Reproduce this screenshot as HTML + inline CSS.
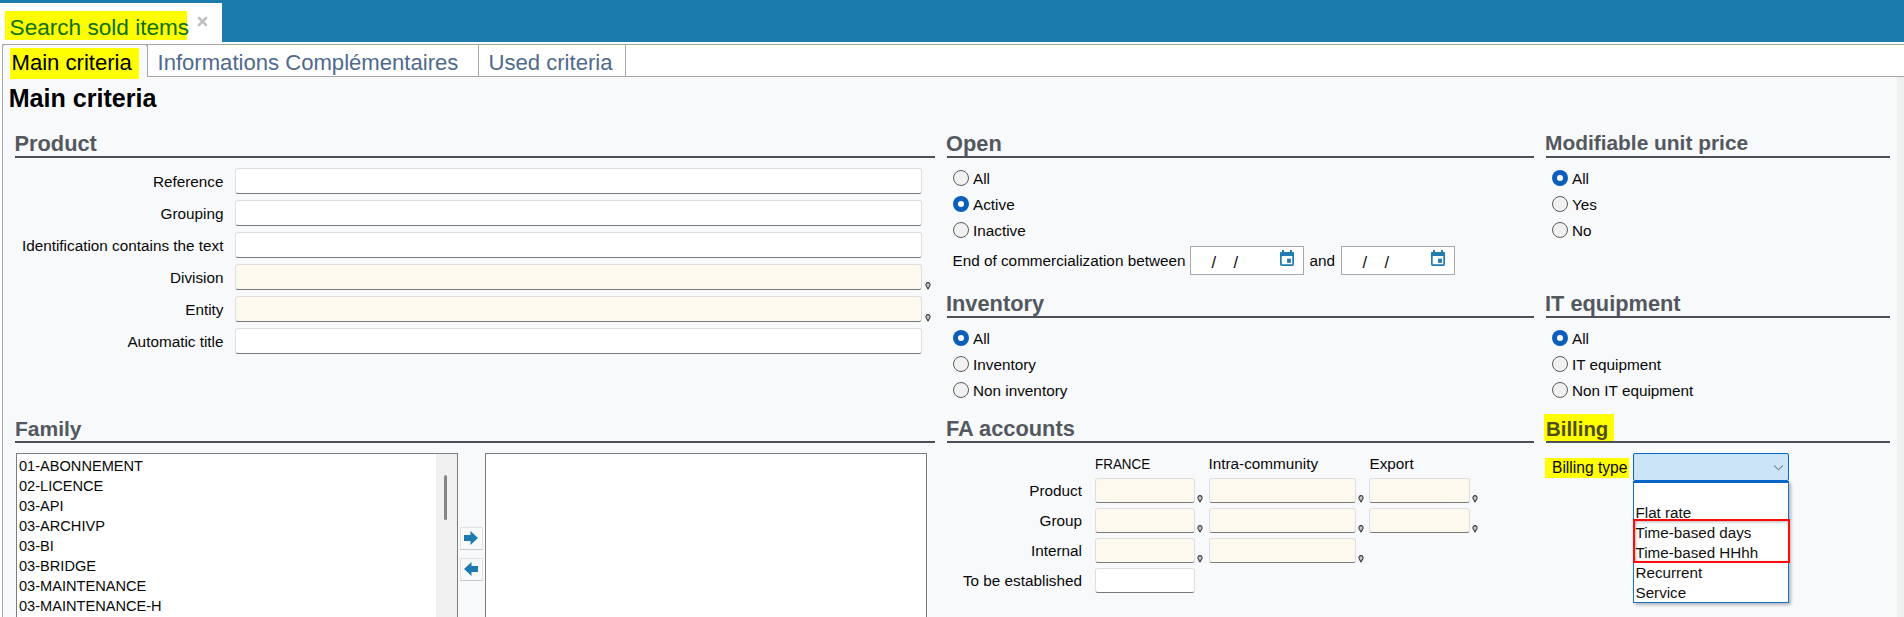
<!DOCTYPE html>
<html><head><meta charset="utf-8"><style>
html,body{margin:0;padding:0}
body{width:1904px;height:617px;overflow:hidden;position:relative;background:#f8f9fb;font-family:"Liberation Sans",sans-serif}
.t{position:absolute;white-space:nowrap}
.r{position:absolute}
.inp{box-sizing:border-box;border:1px solid #dedede;border-bottom:1.5px solid #7a7a7a;border-radius:3px}
</style></head><body>
<div class="r" style="left:0px;top:0px;width:1904px;height:42px;background:#1b7bac"></div>
<div class="r" style="left:0px;top:42px;width:1904px;height:2px;background:#fff"></div>
<div class="r" style="left:0px;top:3px;width:222px;height:39px;background:#fff"></div>
<div class="r" style="left:5px;top:11px;width:182px;height:29px;background:#ffff00"></div>
<div class="t" style="left:9.6px;top:16.87px;font-size:22.6px;line-height:22.6px;color:#0b700b;font-weight:400;">Search sold items</div>
<svg class="r" style="left:197px;top:16px" width="11" height="11" viewBox="0 0 11 11"><path d="M2 2L9 9M9 2L2 9" stroke="#c2c2c2" stroke-width="2.7" stroke-linecap="round"/></svg>
<div class="r" style="left:0px;top:42px;width:1904px;height:575px;background:#fff"></div>
<div class="r" style="left:2px;top:44px;width:1902px;height:1px;background:#a6a6a6"></div>
<div class="r" style="left:2px;top:76px;width:1902px;height:1px;background:#a6a6a6"></div>
<div class="r" style="left:2px;top:44px;width:146px;height:33px;background:#f8f9fb;border:1px solid #a6a6a6;border-bottom:none;border-radius:3px 3px 0 0;box-sizing:border-box"></div>
<div class="r" style="left:147px;top:44px;width:1px;height:33px;background:#a6a6a6"></div>
<div class="r" style="left:478px;top:44px;width:1px;height:33px;background:#a6a6a6"></div>
<div class="r" style="left:625px;top:44px;width:1px;height:33px;background:#a6a6a6"></div>
<div class="r" style="left:10px;top:48px;width:129px;height:31px;background:#ffff00"></div>
<div class="t" style="left:11.5px;top:51.79px;font-size:22.1px;line-height:22.1px;color:#000;font-weight:400;">Main criteria</div>
<div class="t" style="left:157.5px;top:51.79px;font-size:22.1px;line-height:22.1px;color:#4f6a8c;font-weight:400;">Informations Compl&eacute;mentaires</div>
<div class="t" style="left:488.5px;top:51.79px;font-size:22.1px;line-height:22.1px;color:#4f6a8c;font-weight:400;">Used criteria</div>
<div class="r" style="left:2px;top:77px;width:1902px;height:540px;background:#f8f9fb"></div>
<div class="r" style="left:2px;top:77px;width:1px;height:540px;background:#a6a6a6"></div>
<div class="r" style="left:1897px;top:77px;width:7px;height:540px;background:#efefef"></div>
<div class="r" style="left:10px;top:48px;width:129px;height:31px;background:#ffff00"></div>
<div class="t" style="left:11.5px;top:51.79px;font-size:22.1px;line-height:22.1px;color:#000;font-weight:400;">Main criteria</div>
<div class="t" style="left:8.7px;top:85.75px;font-size:25.1px;line-height:25.1px;color:#000;font-weight:700;">Main criteria</div>
<div class="t" style="left:14.5px;top:132.55px;font-size:21.8px;line-height:21.8px;color:#53585f;font-weight:700;">Product</div>
<div class="r" style="left:15px;top:156px;width:920px;height:2px;background:#4b5058"></div>
<div class="t" style="left:946px;top:132.55px;font-size:21.8px;line-height:21.8px;color:#53585f;font-weight:700;">Open</div>
<div class="r" style="left:947px;top:156px;width:587px;height:2px;background:#4b5058"></div>
<div class="t" style="left:1545px;top:133.31px;font-size:20.9px;line-height:20.9px;color:#53585f;font-weight:700;">Modifiable unit price</div>
<div class="r" style="left:1546px;top:156px;width:344px;height:2px;background:#4b5058"></div>
<div class="t" style="left:946px;top:292.55px;font-size:21.8px;line-height:21.8px;color:#53585f;font-weight:700;">Inventory</div>
<div class="r" style="left:947px;top:316px;width:587px;height:2px;background:#4b5058"></div>
<div class="t" style="left:1545px;top:292.55px;font-size:21.8px;line-height:21.8px;color:#53585f;font-weight:700;">IT equipment</div>
<div class="r" style="left:1546px;top:316px;width:344px;height:2px;background:#4b5058"></div>
<div class="t" style="left:15px;top:418.22px;font-size:21.0px;line-height:21.0px;color:#53585f;font-weight:700;">Family</div>
<div class="r" style="left:15px;top:441px;width:920px;height:2px;background:#4b5058"></div>
<div class="t" style="left:946px;top:417.55px;font-size:21.8px;line-height:21.8px;color:#53585f;font-weight:700;">FA accounts</div>
<div class="r" style="left:947px;top:441px;width:587px;height:2px;background:#4b5058"></div>
<div class="r" style="left:1544px;top:414px;width:70px;height:27px;background:#ffff00"></div>
<div class="t" style="left:1546px;top:418.73px;font-size:20.4px;line-height:20.4px;color:#4e4e14;font-weight:700;">Billing</div>
<div class="r" style="left:1546px;top:441px;width:344px;height:2px;background:#4b5058"></div>
<div class="t" style="left:-376.5px;width:600px;text-align:right;top:174.05px;font-size:15.3px;line-height:15.3px;color:#080808;font-weight:400;">Reference</div>
<div class="r inp" style="left:235px;top:168px;width:687px;height:26px;background:#fff"></div>
<div class="t" style="left:-376.5px;width:600px;text-align:right;top:206.05px;font-size:15.3px;line-height:15.3px;color:#080808;font-weight:400;">Grouping</div>
<div class="r inp" style="left:235px;top:200px;width:687px;height:26px;background:#fff"></div>
<div class="t" style="left:-376.5px;width:600px;text-align:right;top:238.05px;font-size:15.3px;line-height:15.3px;color:#080808;font-weight:400;">Identification contains the text</div>
<div class="r inp" style="left:235px;top:232px;width:687px;height:26px;background:#fff"></div>
<div class="t" style="left:-376.5px;width:600px;text-align:right;top:270.05px;font-size:15.3px;line-height:15.3px;color:#080808;font-weight:400;">Division</div>
<div class="r inp" style="left:235px;top:264px;width:687px;height:26px;background:#fdf9ee"></div>
<svg class="r" style="left:924.5px;top:282px" width="6" height="8" viewBox="0 0 6 8"><path d="M3 6.9L1.0 3.4A2.1 2.1 0 1 1 5.0 3.4Z" fill="#c8c8c8" stroke="#3a3a3a" stroke-width="1.1" stroke-linejoin="round"/></svg>
<div class="t" style="left:-376.5px;width:600px;text-align:right;top:302.05px;font-size:15.3px;line-height:15.3px;color:#080808;font-weight:400;">Entity</div>
<div class="r inp" style="left:235px;top:296px;width:687px;height:26px;background:#fdf9ee"></div>
<svg class="r" style="left:924.5px;top:314px" width="6" height="8" viewBox="0 0 6 8"><path d="M3 6.9L1.0 3.4A2.1 2.1 0 1 1 5.0 3.4Z" fill="#c8c8c8" stroke="#3a3a3a" stroke-width="1.1" stroke-linejoin="round"/></svg>
<div class="t" style="left:-376.5px;width:600px;text-align:right;top:334.05px;font-size:15.3px;line-height:15.3px;color:#080808;font-weight:400;">Automatic title</div>
<div class="r inp" style="left:235px;top:328px;width:687px;height:26px;background:#fff"></div>
<div class="r" style="left:953px;top:170px;width:16px;height:16px;border-radius:50%;background:#f1f1f1;border:1px solid #5c5c5c;box-sizing:border-box"></div>
<div class="t" style="left:973px;top:170.55px;font-size:15.3px;line-height:15.3px;color:#080808;font-weight:400;">All</div>
<div class="r" style="left:953px;top:196px;width:16px;height:16px;border-radius:50%;background:#0b5fb9"></div>
<div class="r" style="left:958px;top:201px;width:6px;height:6px;border-radius:50%;background:#fff"></div>
<div class="t" style="left:973px;top:196.55px;font-size:15.3px;line-height:15.3px;color:#080808;font-weight:400;">Active</div>
<div class="r" style="left:953px;top:222px;width:16px;height:16px;border-radius:50%;background:#f1f1f1;border:1px solid #5c5c5c;box-sizing:border-box"></div>
<div class="t" style="left:973px;top:222.55px;font-size:15.3px;line-height:15.3px;color:#080808;font-weight:400;">Inactive</div>
<div class="r" style="left:1552px;top:170px;width:16px;height:16px;border-radius:50%;background:#0b5fb9"></div>
<div class="r" style="left:1557px;top:175px;width:6px;height:6px;border-radius:50%;background:#fff"></div>
<div class="t" style="left:1572px;top:170.55px;font-size:15.3px;line-height:15.3px;color:#080808;font-weight:400;">All</div>
<div class="r" style="left:1552px;top:196px;width:16px;height:16px;border-radius:50%;background:#f1f1f1;border:1px solid #5c5c5c;box-sizing:border-box"></div>
<div class="t" style="left:1572px;top:196.55px;font-size:15.3px;line-height:15.3px;color:#080808;font-weight:400;">Yes</div>
<div class="r" style="left:1552px;top:222px;width:16px;height:16px;border-radius:50%;background:#f1f1f1;border:1px solid #5c5c5c;box-sizing:border-box"></div>
<div class="t" style="left:1572px;top:222.55px;font-size:15.3px;line-height:15.3px;color:#080808;font-weight:400;">No</div>
<div class="r" style="left:953px;top:330px;width:16px;height:16px;border-radius:50%;background:#0b5fb9"></div>
<div class="r" style="left:958px;top:335px;width:6px;height:6px;border-radius:50%;background:#fff"></div>
<div class="t" style="left:973px;top:330.55px;font-size:15.3px;line-height:15.3px;color:#080808;font-weight:400;">All</div>
<div class="r" style="left:953px;top:356px;width:16px;height:16px;border-radius:50%;background:#f1f1f1;border:1px solid #5c5c5c;box-sizing:border-box"></div>
<div class="t" style="left:973px;top:356.55px;font-size:15.3px;line-height:15.3px;color:#080808;font-weight:400;">Inventory</div>
<div class="r" style="left:953px;top:382px;width:16px;height:16px;border-radius:50%;background:#f1f1f1;border:1px solid #5c5c5c;box-sizing:border-box"></div>
<div class="t" style="left:973px;top:382.55px;font-size:15.3px;line-height:15.3px;color:#080808;font-weight:400;">Non inventory</div>
<div class="r" style="left:1552px;top:330px;width:16px;height:16px;border-radius:50%;background:#0b5fb9"></div>
<div class="r" style="left:1557px;top:335px;width:6px;height:6px;border-radius:50%;background:#fff"></div>
<div class="t" style="left:1572px;top:330.55px;font-size:15.3px;line-height:15.3px;color:#080808;font-weight:400;">All</div>
<div class="r" style="left:1552px;top:356px;width:16px;height:16px;border-radius:50%;background:#f1f1f1;border:1px solid #5c5c5c;box-sizing:border-box"></div>
<div class="t" style="left:1572px;top:356.55px;font-size:15.3px;line-height:15.3px;color:#080808;font-weight:400;">IT equipment</div>
<div class="r" style="left:1552px;top:382px;width:16px;height:16px;border-radius:50%;background:#f1f1f1;border:1px solid #5c5c5c;box-sizing:border-box"></div>
<div class="t" style="left:1572px;top:382.55px;font-size:15.3px;line-height:15.3px;color:#080808;font-weight:400;">Non IT equipment</div>
<div class="t" style="left:952.5px;top:253.05px;font-size:15.3px;line-height:15.3px;color:#080808;font-weight:400;">End of commercialization between</div>
<div class="t" style="left:1309.5px;top:253.05px;font-size:15.3px;line-height:15.3px;color:#080808;font-weight:400;">and</div>
<div class="r" style="left:1190px;top:246px;width:114px;height:29px;background:#fff;border:1px solid #a9a9a9;box-sizing:border-box"></div>
<div class="t" style="left:1211.5px;top:254.03px;font-size:16.5px;line-height:16.5px;color:#080808;font-weight:400;">/</div>
<div class="t" style="left:1233.5px;top:254.03px;font-size:16.5px;line-height:16.5px;color:#080808;font-weight:400;">/</div>
<svg class="r" style="left:1280px;top:250px" width="14" height="16" viewBox="0 0 14 16"><rect x="0.85" y="2.85" width="12.3" height="12.3" rx="0.9" fill="none" stroke="#1f7bb0" stroke-width="1.7"/><rect x="0" y="2" width="14" height="4" rx="0.8" fill="#1f7bb0"/><rect x="2" y="0" width="2" height="3" fill="#1f7bb0"/><rect x="10" y="0" width="2" height="3" fill="#1f7bb0"/><rect x="7.1" y="8.7" width="3.8" height="4.2" fill="#1f7bb0"/></svg>
<div class="r" style="left:1341px;top:246px;width:114px;height:29px;background:#fff;border:1px solid #a9a9a9;box-sizing:border-box"></div>
<div class="t" style="left:1362.5px;top:254.03px;font-size:16.5px;line-height:16.5px;color:#080808;font-weight:400;">/</div>
<div class="t" style="left:1384.5px;top:254.03px;font-size:16.5px;line-height:16.5px;color:#080808;font-weight:400;">/</div>
<svg class="r" style="left:1431px;top:250px" width="14" height="16" viewBox="0 0 14 16"><rect x="0.85" y="2.85" width="12.3" height="12.3" rx="0.9" fill="none" stroke="#1f7bb0" stroke-width="1.7"/><rect x="0" y="2" width="14" height="4" rx="0.8" fill="#1f7bb0"/><rect x="2" y="0" width="2" height="3" fill="#1f7bb0"/><rect x="10" y="0" width="2" height="3" fill="#1f7bb0"/><rect x="7.1" y="8.7" width="3.8" height="4.2" fill="#1f7bb0"/></svg>
<div class="r" style="left:16px;top:453px;width:442px;height:187px;background:#fff;border:1px solid #7d7d7d;box-sizing:border-box"></div>
<div class="r" style="left:436px;top:454px;width:21px;height:163px;background:#f0f0f0"></div>
<div class="r" style="left:444px;top:475px;width:3px;height:45px;background:#868686;border-radius:2px"></div>
<div class="t" style="left:19.3px;top:458.13px;font-size:15.2px;line-height:15.2px;color:#080808;font-weight:400;transform:scaleX(0.96);transform-origin:0 0">01-ABONNEMENT</div>
<div class="t" style="left:19.3px;top:478.13px;font-size:15.2px;line-height:15.2px;color:#080808;font-weight:400;transform:scaleX(0.96);transform-origin:0 0">02-LICENCE</div>
<div class="t" style="left:19.3px;top:498.13px;font-size:15.2px;line-height:15.2px;color:#080808;font-weight:400;transform:scaleX(0.96);transform-origin:0 0">03-API</div>
<div class="t" style="left:19.3px;top:518.13px;font-size:15.2px;line-height:15.2px;color:#080808;font-weight:400;transform:scaleX(0.96);transform-origin:0 0">03-ARCHIVP</div>
<div class="t" style="left:19.3px;top:538.13px;font-size:15.2px;line-height:15.2px;color:#080808;font-weight:400;transform:scaleX(0.96);transform-origin:0 0">03-BI</div>
<div class="t" style="left:19.3px;top:558.13px;font-size:15.2px;line-height:15.2px;color:#080808;font-weight:400;transform:scaleX(0.96);transform-origin:0 0">03-BRIDGE</div>
<div class="t" style="left:19.3px;top:578.13px;font-size:15.2px;line-height:15.2px;color:#080808;font-weight:400;transform:scaleX(0.96);transform-origin:0 0">03-MAINTENANCE</div>
<div class="t" style="left:19.3px;top:598.13px;font-size:15.2px;line-height:15.2px;color:#080808;font-weight:400;transform:scaleX(0.96);transform-origin:0 0">03-MAINTENANCE-H</div>
<div class="r" style="left:485px;top:453px;width:442px;height:187px;background:#fff;border:1px solid #7d7d7d;box-sizing:border-box"></div>
<div class="r" style="left:460px;top:527px;width:23px;height:23px;background:#f8f9fb;border:1px solid #e2e2e2;border-bottom-color:#c9c9c9;box-sizing:border-box"></div>
<svg class="r" style="left:463px;top:531px" width="16" height="15" viewBox="0 0 16 15"><path d="M1 4H7.5V0L15 7L7.5 14V10H1Z" fill="#1d7bb0"/></svg>
<div class="r" style="left:460px;top:558px;width:23px;height:23px;background:#f8f9fb;border:1px solid #e2e2e2;border-bottom-color:#c9c9c9;box-sizing:border-box"></div>
<svg class="r" style="left:463px;top:562px" width="16" height="15" viewBox="0 0 16 15"><path d="M15 4H8.5V0L1 7L8.5 14V10H15Z" fill="#1d7bb0"/></svg>
<div class="t" style="left:1094.5px;top:456.86px;font-size:14.7px;line-height:14.7px;color:#080808;font-weight:400;transform:scaleX(0.913);transform-origin:0 0">FRANCE</div>
<div class="t" style="left:1208.5px;top:456.05px;font-size:15.3px;line-height:15.3px;color:#080808;font-weight:400;">Intra-community</div>
<div class="t" style="left:1369.5px;top:456.05px;font-size:15.3px;line-height:15.3px;color:#080808;font-weight:400;">Export</div>
<div class="t" style="left:482px;width:600px;text-align:right;top:482.55px;font-size:15.3px;line-height:15.3px;color:#080808;font-weight:400;">Product</div>
<div class="r inp" style="left:1095px;top:478px;width:100px;height:25px;background:#fdf9ee"></div>
<svg class="r" style="left:1196.5px;top:495px" width="6" height="8" viewBox="0 0 6 8"><path d="M3 6.9L1.0 3.4A2.1 2.1 0 1 1 5.0 3.4Z" fill="#c8c8c8" stroke="#3a3a3a" stroke-width="1.1" stroke-linejoin="round"/></svg>
<div class="r inp" style="left:1209px;top:478px;width:147px;height:25px;background:#fdf9ee"></div>
<svg class="r" style="left:1357.5px;top:495px" width="6" height="8" viewBox="0 0 6 8"><path d="M3 6.9L1.0 3.4A2.1 2.1 0 1 1 5.0 3.4Z" fill="#c8c8c8" stroke="#3a3a3a" stroke-width="1.1" stroke-linejoin="round"/></svg>
<div class="r inp" style="left:1369px;top:478px;width:101px;height:25px;background:#fdf9ee"></div>
<svg class="r" style="left:1471.5px;top:495px" width="6" height="8" viewBox="0 0 6 8"><path d="M3 6.9L1.0 3.4A2.1 2.1 0 1 1 5.0 3.4Z" fill="#c8c8c8" stroke="#3a3a3a" stroke-width="1.1" stroke-linejoin="round"/></svg>
<div class="t" style="left:482px;width:600px;text-align:right;top:512.55px;font-size:15.3px;line-height:15.3px;color:#080808;font-weight:400;">Group</div>
<div class="r inp" style="left:1095px;top:508px;width:100px;height:25px;background:#fdf9ee"></div>
<svg class="r" style="left:1196.5px;top:525px" width="6" height="8" viewBox="0 0 6 8"><path d="M3 6.9L1.0 3.4A2.1 2.1 0 1 1 5.0 3.4Z" fill="#c8c8c8" stroke="#3a3a3a" stroke-width="1.1" stroke-linejoin="round"/></svg>
<div class="r inp" style="left:1209px;top:508px;width:147px;height:25px;background:#fdf9ee"></div>
<svg class="r" style="left:1357.5px;top:525px" width="6" height="8" viewBox="0 0 6 8"><path d="M3 6.9L1.0 3.4A2.1 2.1 0 1 1 5.0 3.4Z" fill="#c8c8c8" stroke="#3a3a3a" stroke-width="1.1" stroke-linejoin="round"/></svg>
<div class="r inp" style="left:1369px;top:508px;width:101px;height:25px;background:#fdf9ee"></div>
<svg class="r" style="left:1471.5px;top:525px" width="6" height="8" viewBox="0 0 6 8"><path d="M3 6.9L1.0 3.4A2.1 2.1 0 1 1 5.0 3.4Z" fill="#c8c8c8" stroke="#3a3a3a" stroke-width="1.1" stroke-linejoin="round"/></svg>
<div class="t" style="left:482px;width:600px;text-align:right;top:542.55px;font-size:15.3px;line-height:15.3px;color:#080808;font-weight:400;">Internal</div>
<div class="r inp" style="left:1095px;top:538px;width:100px;height:25px;background:#fdf9ee"></div>
<svg class="r" style="left:1196.5px;top:555px" width="6" height="8" viewBox="0 0 6 8"><path d="M3 6.9L1.0 3.4A2.1 2.1 0 1 1 5.0 3.4Z" fill="#c8c8c8" stroke="#3a3a3a" stroke-width="1.1" stroke-linejoin="round"/></svg>
<div class="r inp" style="left:1209px;top:538px;width:147px;height:25px;background:#fdf9ee"></div>
<svg class="r" style="left:1357.5px;top:555px" width="6" height="8" viewBox="0 0 6 8"><path d="M3 6.9L1.0 3.4A2.1 2.1 0 1 1 5.0 3.4Z" fill="#c8c8c8" stroke="#3a3a3a" stroke-width="1.1" stroke-linejoin="round"/></svg>
<div class="t" style="left:482px;width:600px;text-align:right;top:572.55px;font-size:15.3px;line-height:15.3px;color:#080808;font-weight:400;">To be established</div>
<div class="r inp" style="left:1095px;top:568px;width:100px;height:25px;background:#fff"></div>
<div class="r" style="left:1545px;top:458px;width:84px;height:20px;background:#ffff00"></div>
<div class="t" style="left:1552px;top:460.29px;font-size:15.6px;line-height:15.6px;color:#080808;font-weight:400;">Billing type</div>
<div class="r" style="left:1633px;top:453px;width:156px;height:28px;background:#cce4f7;border:1px solid #0767cc;border-radius:2px;box-sizing:border-box"></div>
<svg class="r" style="left:1773px;top:464px" width="11" height="8" viewBox="0 0 11 8"><path d="M1 1.5L5.5 5.8L10 1.5" fill="none" stroke="#4a4a4a" stroke-width="0.9"/></svg>
<div class="r" style="left:1633px;top:481px;width:156px;height:122px;background:#fff;border:1px solid #1570d0;border-top:2px solid #0a64c4;box-sizing:border-box;box-shadow:2px 2px 3px rgba(0,0,0,0.28)"></div>
<div class="t" style="left:1635.5px;top:504.83px;font-size:15.2px;line-height:15.2px;color:#111;font-weight:400;">Flat rate</div>
<div class="t" style="left:1635.5px;top:524.83px;font-size:15.2px;line-height:15.2px;color:#111;font-weight:400;">Time-based days</div>
<div class="t" style="left:1635.5px;top:544.83px;font-size:15.2px;line-height:15.2px;color:#111;font-weight:400;">Time-based HHhh</div>
<div class="t" style="left:1635.5px;top:564.83px;font-size:15.2px;line-height:15.2px;color:#111;font-weight:400;">Recurrent</div>
<div class="t" style="left:1635.5px;top:584.83px;font-size:15.2px;line-height:15.2px;color:#111;font-weight:400;">Service</div>
<div class="r" style="left:1633px;top:519px;width:157px;height:44px;border:2px solid #ff0a0a;box-sizing:border-box;box-shadow:inset 1px 1px 3px rgba(0,0,0,0.3)"></div>
</body></html>
